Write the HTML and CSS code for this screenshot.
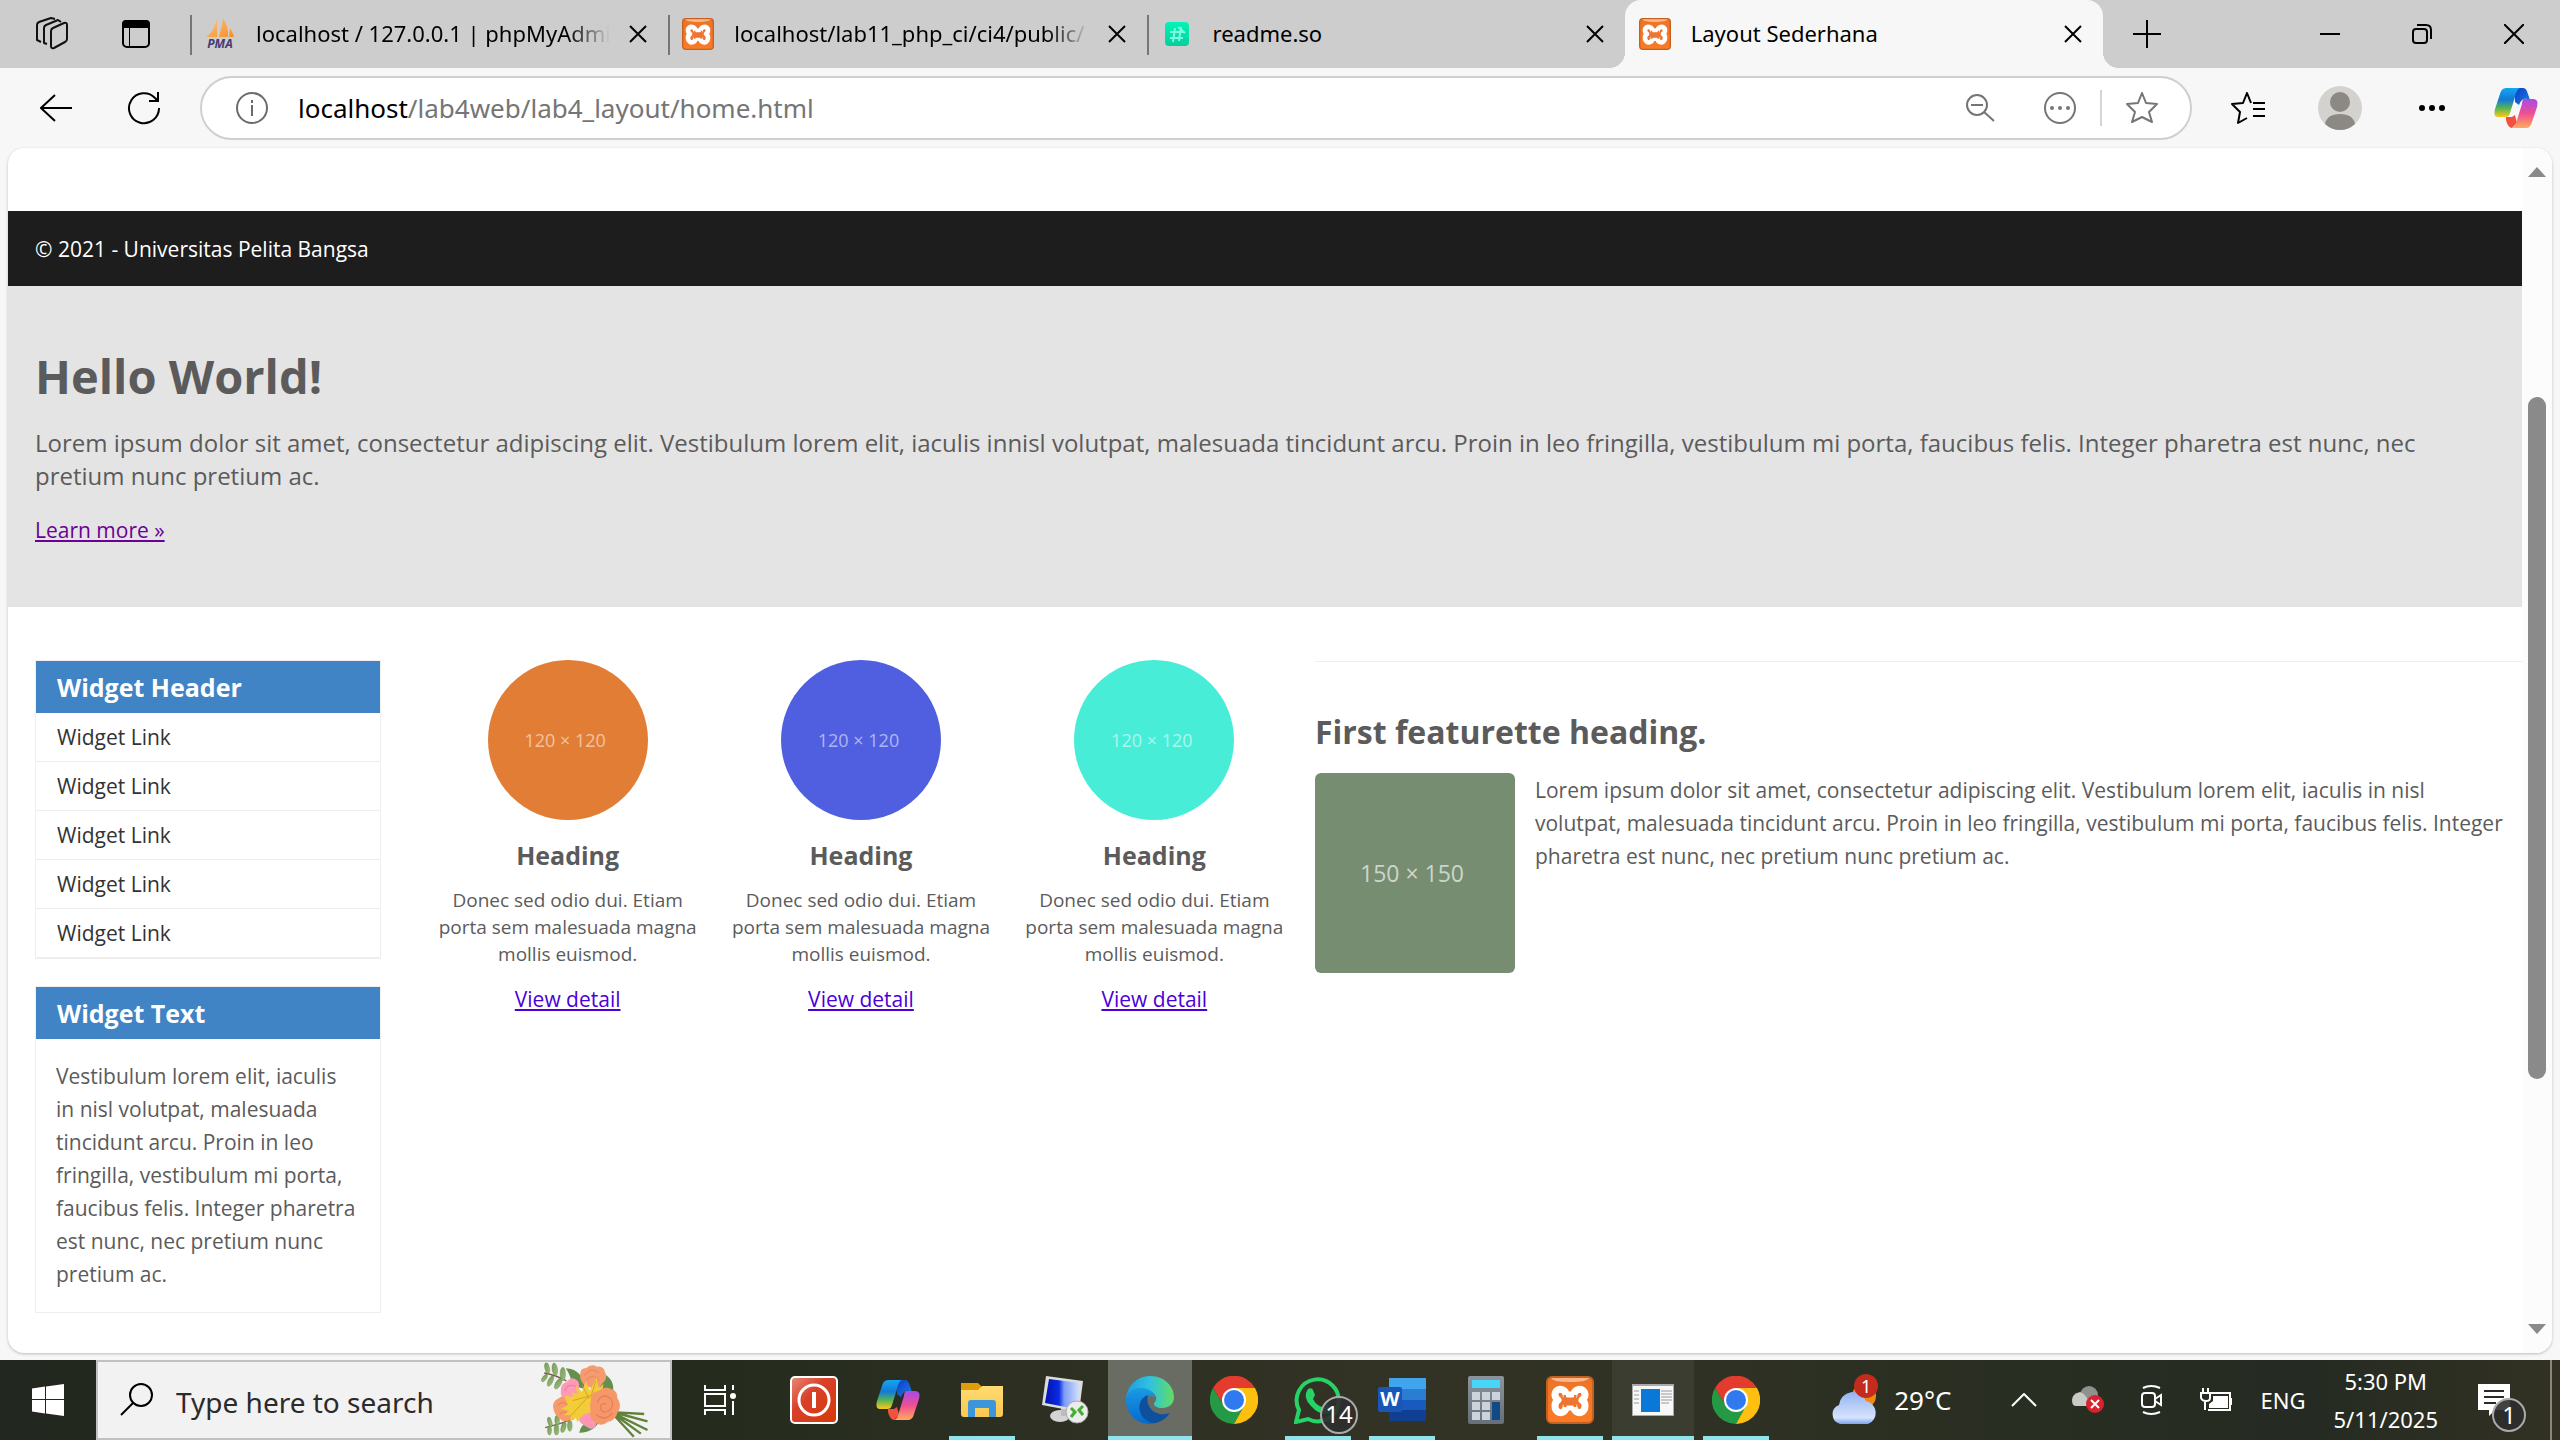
FILE: index.html
```html
<!DOCTYPE html>
<html lang="en">
<head>
<meta charset="utf-8">
<title>Layout Sederhana</title>
<link rel="stylesheet" href="styles.css">
</head>
<body>
<svg class="defs" aria-hidden="true">
  <defs>
    <linearGradient id="g-orange" x1="0" y1="0" x2="0" y2="1"><stop offset="0" stop-color="#ec7427"/><stop offset="1" stop-color="#fb7a26"/></linearGradient>
    <linearGradient id="g-sail" x1="0" y1="0" x2="1" y2="1"><stop offset="0" stop-color="#ffc58a"/><stop offset="1" stop-color="#f98c1d"/></linearGradient>
    <linearGradient id="g-readme" x1="0" y1="0" x2="0" y2="1"><stop offset="0" stop-color="#00f5b8"/><stop offset="1" stop-color="#04cf9c"/></linearGradient>
    <linearGradient id="g-cop1" x1="0" y1="0" x2="0" y2="1"><stop offset="0" stop-color="#14a6f2"/><stop offset=".4" stop-color="#1479d8"/><stop offset=".68" stop-color="#4fb35a"/><stop offset="1" stop-color="#ffc912"/></linearGradient>
    <linearGradient id="g-cop2" x1="0" y1="0" x2="0" y2="1"><stop offset="0" stop-color="#a44ce8"/><stop offset=".5" stop-color="#ef4f93"/><stop offset="1" stop-color="#ffab5c"/></linearGradient>
    <linearGradient id="g-cop3" x1="0" y1="0" x2="1" y2="1"><stop offset="0" stop-color="#0b3fc4"/><stop offset="1" stop-color="#1f7be8"/></linearGradient>
    <linearGradient id="g-power" x1="0" y1="0" x2="1" y2="1"><stop offset="0" stop-color="#e98a78"/><stop offset=".4" stop-color="#d8402a"/><stop offset="1" stop-color="#d63a06"/></linearGradient>
    <linearGradient id="g-folder" x1="0" y1="0" x2="0" y2="1"><stop offset="0" stop-color="#ffdb73"/><stop offset="1" stop-color="#f9c84f"/></linearGradient>
    <linearGradient id="g-screen" x1="0" y1="0" x2="1" y2="0"><stop offset="0" stop-color="#0512b4"/><stop offset=".4" stop-color="#0a2be0"/><stop offset=".55" stop-color="#7b9cf5"/><stop offset="1" stop-color="#d5e2ff"/></linearGradient>
    <linearGradient id="g-edge1" x1="0" y1="0" x2="1" y2="0"><stop offset="0" stop-color="#1b9de2"/><stop offset=".5" stop-color="#2fc2df"/><stop offset="1" stop-color="#62dd63"/></linearGradient>
    <linearGradient id="g-edge2" x1="0" y1="0" x2="0" y2="1"><stop offset="0" stop-color="#1a9be3"/><stop offset="1" stop-color="#0569cf"/></linearGradient>
    <linearGradient id="g-cloud" x1="0" y1="0" x2="0" y2="1"><stop offset="0" stop-color="#93b4f2"/><stop offset=".8" stop-color="#d6e3fd"/><stop offset="1" stop-color="#7ea3ee"/></linearGradient>
    <linearGradient id="g-calc" x1="0" y1="0" x2="0" y2="1"><stop offset="0" stop-color="#8b949c"/><stop offset="1" stop-color="#66707a"/></linearGradient>
    <linearGradient id="g-leaf" x1="0" y1="0" x2="1" y2="1"><stop offset="0" stop-color="#6f9a50"/><stop offset="1" stop-color="#a3c181"/></linearGradient>

    <symbol id="close" viewBox="0 0 24 24"><path d="M4 4 20 20M20 4 4 20" fill="none" stroke="currentColor" stroke-width="2"/></symbol>

    <symbol id="xampp" viewBox="0 0 48 48">
      <rect x="1" y="1" width="46" height="46" rx="5" fill="url(#g-orange)" stroke="#c5611f" stroke-width="2"/>
      <path d="M5 2h38c-2 3-8 4-19 4S7 5 5 2Z" fill="#fbb68c"/>
      <path d="M17 14c-5-2-8 1-8 5 0 3 2 4 3 5-2 1-3 3-3 6 0 5 4 8 8 6 2-1 3-3 3-5h8c0 2 1 4 3 5 4 2 8-1 8-6 0-3-1-5-3-6 1-1 3-2 3-5 0-4-3-7-8-5-2 1-3 3-3 5h-8c0-2-1-4-3-5Z" fill="#ee7430" stroke="#fff" stroke-width="7" stroke-linejoin="round"/>
      <path d="M19 19v4h10v-4M19 31v-3h10v3" fill="none" stroke="#ee7430" stroke-width="3"/>
      <path d="M20 19h8v2h-8zM20 31h8v3h-8z" fill="#fff"/>
    </symbol>

    <symbol id="copilot" viewBox="0 0 44 40">
      <path d="M21 0h8c3 0 4 3 5 6l2 6c-6-3-9 0-11 5l-4-3Z" fill="url(#g-cop3)"/>
      <path d="M13 0h13c-3 1-4 5-5 9l-5 16c-1 3-2 4-5 4H4c-4 0-4-4-3-8L6 6c1-4 3-6 7-6Z" fill="url(#g-cop1)"/>
      <path d="M12 29h6l3-2 2 8-5 5c-3 0-5-4-6-8Z" fill="#f2513d"/>
      <path d="M30 11h9c5 0 5 4 4 8l-5 15c-1 4-3 6-7 6H18c3-1 4-4 5-8l5-16c0-3 1-5 2-5Z" fill="url(#g-cop2)"/>
    </symbol>

    <symbol id="chrome" viewBox="0 0 48 48">
      <path d="M3 12A24 24 0 0 1 45 12H24L14 30Z" fill="#e33b2e"/>
      <path d="M3 12A24 24 0 0 0 24 48L34 30 24 34 14 30Z" fill="#249a45"/>
      <path d="M45 12A24 24 0 0 1 24 48L34 30 34 18 24 12Z" fill="#fdbf10"/>
      <circle cx="24" cy="24" r="12" fill="#fff"/><circle cx="24" cy="24" r="10" fill="#2f7af0"/>
    </symbol>
  </defs>
</svg>

<header class="tabs">
  <div class="tabs-tools">
    <button class="icon-btn" aria-label="Workspaces">
      <svg width="34" height="34" viewBox="0 0 34 34" fill="none" stroke="#111" stroke-width="2" stroke-linejoin="round"><path d="M16 14q0-2 2-3l11-5q3-1 3 2v14q0 2-2 3L19 31q-3 1-3-2Z"/><path d="M12 27l-3-1V11q0-2 2-3L23 3l3 2M6 25 2 23V8q0-2 2-3L16 1l4 1"/></svg>
    </button>
    <button class="icon-btn" aria-label="Tab actions">
      <svg width="30" height="30" viewBox="0 0 30 30"><rect x="2" y="2" width="26" height="26" rx="4" fill="none" stroke="#000" stroke-width="2"/><path d="M1 9V5q0-4 4-4h20q4 0 4 4v4ZM8 9h1v19H8Z"/></svg>
    </button>
  </div>
  <nav class="tab-list" aria-label="Tabs">
    <div class="tab">
      <svg class="favicon" viewBox="0 0 32 32"><path d="M13 1v18H2Q10 14 13 1ZM19 0q6 10 5 19H15q3-10 4-19ZM26 10q3 5 4 9h-5Z" fill="url(#g-sail)"/><text x="16" y="30" text-anchor="middle" class="pma">PMA</text></svg>
      <span class="tab-title faded">localhost / 127.0.0.1 | phpMyAdmin</span>
      <button class="tab-close" aria-label="Close tab"><svg><use href="#close"/></svg></button>
    </div>
    <div class="tab">
      <svg class="favicon"><use href="#xampp"/></svg>
      <span class="tab-title faded">localhost/lab11_php_ci/ci4/public/</span>
      <button class="tab-close" aria-label="Close tab"><svg><use href="#close"/></svg></button>
    </div>
    <div class="tab">
      <svg class="favicon" viewBox="0 0 32 32"><rect x="4" y="4" width="24" height="24" rx="4" fill="url(#g-readme)"/><path d="M14 10 12 24M20 9l-2 14M9 14h14M9 20h13M17 9l7 6" stroke="#7dffdc" stroke-width="2"/></svg>
      <span class="tab-title">readme.so</span>
      <button class="tab-close" aria-label="Close tab"><svg><use href="#close"/></svg></button>
    </div>
    <div class="tab active">
      <svg class="favicon"><use href="#xampp"/></svg>
      <span class="tab-title">Layout Sederhana</span>
      <button class="tab-close" aria-label="Close tab"><svg><use href="#close"/></svg></button>
    </div>
  </nav>
  <button class="icon-btn new-tab" aria-label="New tab"><svg width="28" height="28" viewBox="0 0 28 28"><path d="M14 0v28M0 14h28" stroke="#000" stroke-width="2"/></svg></button>
  <div class="window-buttons">
    <button class="icon-btn" aria-label="Minimize"><svg width="20" height="20" viewBox="0 0 20 20"><path d="M0 10h20" stroke="#000" stroke-width="2"/></svg></button>
    <button class="icon-btn" aria-label="Restore"><svg width="20" height="20" viewBox="0 0 20 20" fill="none" stroke="#000" stroke-width="2"><rect x="1" y="5" width="14" height="14" rx="3"/><path d="M5 1h9q5 0 5 5v9"/></svg></button>
    <button class="icon-btn" aria-label="Close window"><svg width="20" height="20" viewBox="0 0 20 20"><path d="M0 0 20 20M20 0 0 20" stroke="#000" stroke-width="2"/></svg></button>
  </div>
</header>

<div class="toolbar">
  <button class="icon-btn" aria-label="Back"><svg width="32" height="28" viewBox="0 0 32 28" fill="none" stroke="#000" stroke-width="2"><path d="M32 14H1M15 1 1 14l14 13"/></svg></button>
  <button class="icon-btn" aria-label="Refresh"><svg width="34" height="34" viewBox="0 0 34 34" fill="none" stroke="#000" stroke-width="2"><path d="M32 17A15 15 0 1 1 28 7l3 3M31 1v9h-9"/></svg></button>
  <form class="address">
    <svg width="32" height="32" viewBox="0 0 32 32" fill="none" stroke="#6b6b6b" stroke-width="2"><circle cx="16" cy="16" r="15"/><path d="M16 13v11M16 8v3"/></svg>
    <a class="url" href="#"><b>localhost</b>/lab4web/lab4_layout/home.html</a>
    <button type="button" class="icon-btn wide" aria-label="Zoom out"><svg width="30" height="30" viewBox="0 0 30 30" fill="none" stroke="#757575" stroke-width="2"><circle cx="12" cy="12" r="10"/><path d="M6 12h12M19 19l10 9"/></svg></button>
    <button type="button" class="icon-btn wide" aria-label="More"><svg width="32" height="32" viewBox="0 0 32 32"><circle cx="16" cy="16" r="15" fill="none" stroke="#757575" stroke-width="2"/><g fill="#757575"><circle cx="8" cy="16" r="2"/><circle cx="16" cy="16" r="2"/><circle cx="24" cy="16" r="2"/></g></svg></button>
    <span class="divider"></span>
    <button type="button" class="icon-btn wide" aria-label="Favorite"><svg width="34" height="34" viewBox="0 0 34 34" fill="none" stroke="#757575" stroke-width="2" stroke-linejoin="round"><path d="m17 2 4 10 11 1-8 8 3 10-10-5-10 5 3-10-8-8 11-1Z"/></svg></button>
  </form>
  <div class="toolbar-end">
    <button class="icon-btn" aria-label="Favorites"><svg width="34" height="34" viewBox="0 0 34 34" fill="none" stroke="#000" stroke-width="2" stroke-linejoin="round"><path d="M20 12 16 2l-4 10-11 1 8 8-2 11 9-5M22 12h12M22 18h12M22 25h12"/></svg></button>
    <button class="icon-btn" aria-label="Profile"><svg width="46" height="46" viewBox="0 0 46 46"><circle cx="23" cy="23" r="22" fill="#d3d2ce"/><circle cx="23" cy="17" r="10" fill="#8c8884"/><path d="M8 39q2-10 15-10t15 10a22 22 0 0 1-30 0Z" fill="#8c8884"/></svg></button>
    <button class="icon-btn" aria-label="Settings and more"><svg width="28" height="8" viewBox="0 0 28 8"><circle cx="4" cy="4" r="3"/><circle cx="14" cy="4" r="3"/><circle cx="24" cy="4" r="3"/></svg></button>
    <button class="icon-btn" aria-label="Copilot"><svg width="44" height="40"><use href="#copilot"/></svg></button>
  </div>
</div>

<main class="viewport">
  <div class="page">
    <div class="footer-bar">© 2021 - Universitas Pelita Bangsa</div>
    <section class="hero">
      <h1>Hello World!</h1>
      <p>Lorem ipsum dolor sit amet, consectetur adipiscing elit. Vestibulum lorem elit, iaculis innisl volutpat, malesuada tincidunt arcu. Proin in leo fringilla, vestibulum mi porta, faucibus felis. Integer pharetra est nunc, nec pretium nunc pretium ac.</p>
      <a href="#">Learn more »</a>
    </section>
    <div class="columns">
      <aside class="sidebar">
        <section class="widget">
          <h3>Widget Header</h3>
          <ul>
            <li><a href="#">Widget Link</a></li>
            <li><a href="#">Widget Link</a></li>
            <li><a href="#">Widget Link</a></li>
            <li><a href="#">Widget Link</a></li>
            <li><a href="#">Widget Link</a></li>
          </ul>
        </section>
        <section class="widget">
          <h3>Widget Text</h3>
          <p>Vestibulum lorem elit, iaculis in nisl volutpat, malesuada tincidunt arcu. Proin in leo fringilla, vestibulum mi porta, faucibus felis. Integer pharetra est nunc, nec pretium nunc pretium ac.</p>
        </section>
      </aside>
      <div class="cards">
        <article class="card">
          <div class="circle orange">120 × 120</div>
          <h3>Heading</h3>
          <p>Donec sed odio dui. Etiam porta sem malesuada magna mollis euismod.</p>
          <a href="#">View detail</a>
        </article>
        <article class="card">
          <div class="circle blue">120 × 120</div>
          <h3>Heading</h3>
          <p>Donec sed odio dui. Etiam porta sem malesuada magna mollis euismod.</p>
          <a href="#">View detail</a>
        </article>
        <article class="card">
          <div class="circle teal">120 × 120</div>
          <h3>Heading</h3>
          <p>Donec sed odio dui. Etiam porta sem malesuada magna mollis euismod.</p>
          <a href="#">View detail</a>
        </article>
      </div>
      <section class="featurette">
        <h2>First featurette heading.</h2>
        <div class="media">
          <div class="thumb">150 × 150</div>
          <p>Lorem ipsum dolor sit amet, consectetur adipiscing elit. Vestibulum lorem elit, iaculis in nisl volutpat, malesuada tincidunt arcu. Proin in leo fringilla, vestibulum mi porta, faucibus felis. Integer pharetra est nunc, nec pretium nunc pretium ac.</p>
        </div>
      </section>
    </div>
  </div>
  <div class="scrollbar" aria-hidden="true">
    <svg width="18" height="10" viewBox="0 0 18 10"><path d="M9 0 18 10H0Z" fill="#8a8a8a"/></svg>
    <div class="track"><span class="scroll-thumb"></span></div>
    <svg width="18" height="10" viewBox="0 0 18 10"><path d="M0 0H18L9 10Z" fill="#8a8a8a"/></svg>
  </div>
</main>

<footer class="taskbar">
  <button class="start" aria-label="Start"><svg width="32" height="32" viewBox="0 0 32 32" fill="#fff"><path d="M0 4.500 13 2.600V15H0ZM14 2.400 32 0V15H14ZM0 16H13V29.400L0 27.500ZM14 16H32V32L14 29.600Z"/></svg></button>
  <label class="search">
    <svg width="34" height="34" viewBox="0 0 34 34" fill="none" stroke="#000" stroke-width="2"><circle cx="21" cy="12" r="11"/><path d="M13 20 1 32"/></svg>
    <input type="text" placeholder="Type here to search" aria-label="Search">
    <svg class="bouquet" width="110" height="76" viewBox="35 19 325 228">
      <path d="M45 52Q80 58 112 76M48 216Q95 205 135 188" fill="none" stroke="#7d5a45" stroke-width="4"/>
      <g fill="url(#g-leaf)" stroke="#55793f" stroke-width="1"><ellipse cx="54" cy="37" rx="7" ry="16" transform="rotate(-12 54 37)"/><ellipse cx="77" cy="41" rx="8" ry="19" transform="rotate(-8 77 41)"/><ellipse cx="101" cy="55" rx="8" ry="20"/><ellipse cx="46" cy="67" rx="6" ry="13" transform="rotate(35 46 67)"/><ellipse cx="64" cy="76" rx="7" ry="17" transform="rotate(25 64 76)"/><ellipse cx="87" cy="84" rx="8" ry="18" transform="rotate(30 87 84)"/><ellipse cx="62" cy="199" rx="6" ry="15" transform="rotate(-15 62 199)"/><ellipse cx="84" cy="194" rx="7" ry="15"/><ellipse cx="61" cy="224" rx="6" ry="14"/><ellipse cx="82" cy="222" rx="7" ry="16"/><ellipse cx="103" cy="215" rx="7" ry="16" transform="rotate(15 103 215)"/><ellipse cx="122" cy="210" rx="7" ry="17"/></g>
      <path d="M110 38Q160 40 168 100L130 90Q125 60 110 38ZM225 55Q260 75 250 115L210 100ZM150 231Q160 190 212 190 200 230 150 231Z" fill="#64904d"/>
      <path d="M262 170 345 175M262 172 355 197M260 176 355 223M258 178 335 234M256 180 314 243" stroke="#61823b" stroke-width="7"/>
      <path d="M153 55q0-18 18-18 16-14 32-4 20-2 24 15 10 18-4 32l-20 24-38-16q-14-15-12-33Z" fill="#f59b70"/><path d="M165 60q20-28 45-8M172 72q20-20 38 0" fill="none" stroke="#ec8c64" stroke-width="4"/>
      <path d="M95 103q0-20 18-24 12-18 26-8 14 8 10 24 6 20-10 32l-25 12q-22-10-19-36Z" fill="#fd9bb7"/><path d="M106 105q10-24 34-12" fill="none" stroke="#f47fa6" stroke-width="4"/>
      <path d="M72 155q-2-18 14-26 16-12 30-2l18 40-8 24q-20 12-34-2-18-12-20-34Z" fill="#f79a6e"/><path d="M86 150q14-18 28-2M92 176q12-14 24-2" fill="none" stroke="#ec8862" stroke-width="4"/>
      <path d="M145 185l40-28 20 30-6 26q-14 12-26 0-20-6-28-28Z" fill="#fd95b5"/>
      <path d="M105 120l28 4-8-14 20 6-6-27 19 20 12-32 12 28 20-40 6 34 15-15-6 36-20 45-35 12-18 22-4-12-18 10 4-18-22 0 14-14-24-6 22-10Z" fill="#f3cc3a"/><path d="M125 180l55-60M130 135l55-15M160 90l20 40M200 75l-15 50" stroke="#d8a620" stroke-width="3"/>
      <path d="M186 130q0-22 22-24 20-18 38-6 20 6 18 26 16 24 2 42-8 28-30 30-20 18-38 2-18-8-14-34-4-18 2-36Z" fill="#f6976a"/><path d="M204 140q16-32 42-10 12 22-8 36-24 10-24-14 4-12 18-6M200 176q26 24 50-4" fill="none" stroke="#e8805a" stroke-width="4"/>
    </svg>
  </label>
  <div class="apps">
    <button class="app task-view" aria-label="Task View"><svg width="32" height="30" viewBox="0 0 32 30" fill="none" stroke="#fff" stroke-width="2"><path d="M1 0v5h20V0M1 30v-5h20v5M1 9h20v12H1ZM29 0v5M29 16v14"/><circle cx="29" cy="11" r="3" fill="#fff" stroke="none"/></svg></button>
    <button class="app" aria-label="Power"><svg width="48" height="48" viewBox="0 0 48 48"><rect x="1" y="1" width="46" height="46" rx="4" fill="url(#g-power)" stroke="#fff" stroke-width="2"/><circle cx="24" cy="24" r="15" fill="none" stroke="#fff" stroke-width="3"/><path d="M24 16v16" stroke="#fff" stroke-width="4"/></svg></button>
    <button class="app" aria-label="Copilot"><svg width="44" height="40"><use href="#copilot"/></svg></button>
    <button class="app running" aria-label="File Explorer"><svg width="42" height="34" viewBox="0 0 42 34"><path d="M0 0h17l3 3v6H0Z" fill="#e19c06"/><path d="M0 7h17l4-4h21v28q0 3-3 3H3q-3 0-3-3Z" fill="url(#g-folder)"/><path d="M7 34V20q0-3 3-3h22q3 0 3 3v14h-7v-9H14v9Z" fill="#3d96dc"/></svg></button>
    <button class="app" aria-label="Remote Desktop"><svg width="48" height="48" viewBox="0 0 48 48"><ellipse cx="18" cy="40" rx="10" ry="6" fill="#d4d4d4"/><path d="M19 30h8l1 10h-9Z" fill="#bdbdbd"/><path d="M4 0 41 5 37 36 0 29Z" fill="#dcdcdc"/><path d="M7 3 38 7 34 33 3 27Z" fill="url(#g-screen)"/><circle cx="35" cy="36" r="11" fill="#ececec" stroke="#aaa"/><path d="M29 32l4 4-4 5M41 30l-4 4 4 5" fill="none" stroke="#3fae2a" stroke-width="3"/></svg></button>
    <button class="app focused" aria-label="Microsoft Edge"><svg width="48" height="48" viewBox="0 0 48 48"><path d="M0 24A24 24 0 0 1 24 0C39 0 48 11 48 21c0 7-5 11-12 11-5 0-8-2-8-4s3-3 2-7c-2-8-22-12-30 3Z" fill="url(#g-edge1)"/><path d="M0 24C1 15 8 12 14 12c9 0 15 5 15 9-6-3-12 1-12 9 0 8 8 15 14 17C15 51 0 41 0 24Z" fill="url(#g-edge2)"/><path d="M22 19c-9 3-11 13-6 21 5 7 13 8 17 6 5-2 8-5 11-9-5 2-14 2-19-4-4-5-4-10-3-14Z" fill="#0d509c"/></svg></button>
    <button class="app" aria-label="Google Chrome"><svg width="48" height="48"><use href="#chrome"/></svg></button>
    <button class="app running" aria-label="WhatsApp"><svg width="48" height="48" viewBox="0 0 48 48"><path d="M2 46 5 34A21 21 0 1 1 14 43Z" fill="none" stroke="#25d366" stroke-width="4"/><path d="M14 13q4-2 5 1l2 5-2 4q3 6 9 8l4-3 6 4q0 5-6 6-8 0-15-8-9-9-3-17Z" fill="#25d366"/></svg><span class="badge">14</span></button>
    <button class="app running" aria-label="Word"><svg width="48" height="44" viewBox="0 0 48 44"><path d="M11 0h37v11H11Z" fill="#41a5ee"/><path d="M11 11h37v11H11Z" fill="#2b7cd3"/><path d="M11 22h37v10H11Z" fill="#185abd"/><path d="M11 32h37v11H11Z" fill="#103f91"/><rect y="9" width="24" height="25" rx="2" fill="#1956b8"/><text x="12" y="28" text-anchor="middle" class="word-w">W</text></svg></button>
    <button class="app" aria-label="Calculator"><svg width="36" height="48" viewBox="0 0 36 48"><rect width="36" height="48" rx="2" fill="url(#g-calc)"/><path d="M4 4h28v8H4Z" fill="#45d6f8"/><path d="M4 16h8v8H4ZM14 16h8v8h-8ZM24 16h8v8h-8ZM4 26h8v8H4ZM14 26h8v8h-8ZM4 36h8v8H4ZM14 36h8v8h-8Z" fill="#ccd3da"/><path d="M24 26h8v18h-8Z" fill="#124a86"/></svg></button>
    <button class="app running" aria-label="XAMPP"><svg width="48" height="48"><use href="#xampp"/></svg></button>
    <button class="app stacked" aria-label="Window"><svg width="42" height="32" viewBox="0 0 42 32"><path d="M0 0h42v32H0Z" fill="#a9a9a9"/><path d="M1 2h40v29H1Z" fill="#f7f7f7"/><path d="M9 5h19v23H9Z" fill="#0a78d7"/><path d="M29 7h11M29 10h11M29 13h11M29 16h11M29 19h8M2 7h5M2 11h5M2 15h5M2 19h5" stroke="#999"/></svg></button>
    <button class="app running" aria-label="Google Chrome"><svg width="48" height="48"><use href="#chrome"/></svg></button>
  </div>
  <div class="tray">
    <button class="weather"><span class="weather-icon"><svg width="48" height="48" viewBox="0 0 48 48"><circle cx="34" cy="20" r="12" fill="#f08a12"/><path d="M10 48a10 10 0 0 1-1-19 14 14 0 0 1 27-4A12 12 0 0 1 38 48Z" fill="url(#g-cloud)"/></svg><span class="alert">1</span></span>29°C</button>
    <button class="icon-btn" aria-label="Show hidden icons"><svg width="26" height="14" viewBox="0 0 26 14" fill="none" stroke="#fff" stroke-width="2"><path d="M1 13 13 1l12 12"/></svg></button>
    <button class="icon-btn" aria-label="OneDrive"><svg width="32" height="28" viewBox="0 0 32 28"><circle cx="17" cy="9" r="9" fill="#8f918d"/><path d="M8 6a12 12 0 0 1 8 14H4Q0 20 0 14T8 6Z" fill="#c9cac7"/><circle cx="23" cy="18" r="9" fill="#d8232f"/><path d="m19 14 8 8m0-8-8 8" stroke="#fff" stroke-width="2"/></svg></button>
    <button class="icon-btn" aria-label="Meet Now"><svg width="24" height="30" viewBox="0 0 24 30" fill="none" stroke="#fff" stroke-width="2"><rect x="2" y="8" width="13" height="14" rx="3"/><path d="m15 14 6-4v10l-6-4M3 3q8-4 17 0M3 27q8 4 17 0"/></svg></button>
    <button class="icon-btn" aria-label="Battery"><svg width="32" height="24" viewBox="0 0 32 24" fill="none" stroke="#fff" stroke-width="2"><path d="M10 5h20v17H8M31 10v7M3 0v5M8 0v5M1 5h9v5q0 3-4 3t-5-3ZM5 13v9"/><path d="M13 8h15v12H9v-4l4-3Z" fill="#fff" stroke="none"/></svg></button>
    <button class="lang">ENG</button>
    <button class="clock"><span>5:30 PM</span><span>5/11/2025</span></button>
    <button class="notify" aria-label="Notifications"><svg width="32" height="32" viewBox="0 0 32 32"><path d="M0 0h32v26H17l-6 6v-6H0Z" fill="#fff"/><path d="M6 7h20M6 13h20M6 19h12" stroke="#2a2c24" stroke-width="2"/></svg><span class="badge">1</span></button>
  </div>
</footer>
</body>
</html>
```
FILE: styles.css
```css
* { box-sizing: border-box; }

body {
  margin: 0;
  min-height: 100vh;
  display: flex;
  flex-direction: column;
  background: #f7f7f7;
  color: #000;
  font-family: "Open Sans", "Noto Sans", sans-serif;
}

button {
  margin: 0;
  padding: 0;
  border: 0;
  background: none;
  color: inherit;
  font: inherit;
}

h1, h2, h3, p, ul { margin: 0; padding: 0; }

h1, h2, h3 { font-weight: 700; }

svg { display: block; flex: none; }

.defs { position: absolute; width: 0; height: 0; }

.icon-btn {
  display: flex;
  align-items: center;
  justify-content: center;
  min-width: 48px;
  height: 48px;
}

/* Tab strip */
.tabs {
  display: flex;
  align-items: center;
  height: 68px;
  background: #cdcdcd;
  font-family: "Noto Sans", sans-serif;
  font-size: 22px;
}

.tabs-tools {
  display: flex;
  gap: 36px;
  width: 190px;
  padding-left: 28px;
}

.tab-list { display: flex; flex: 0 1 1913px; min-width: 0; height: 100%; }

.tab {
  position: relative;
  display: flex;
  align-items: center;
  flex: 1;
  min-width: 0;
  padding: 0 14px;
}

.tab::before {
  content: "";
  position: absolute;
  left: 0;
  top: 15px;
  bottom: 13px;
  width: 2px;
  background: #767676;
}

.tab.active {
  background: #f7f7f7;
  border-radius: 16px 16px 0 0;
}

.tab.active::before,
.tab.active::after {
  content: "";
  position: absolute;
  top: auto;
  bottom: 0;
  width: 16px;
  height: 16px;
}

.tab.active::before {
  left: -16px;
  background: radial-gradient(circle at 0 0, #cdcdcd 16px, #f7f7f7 16px);
}

.tab.active::after {
  right: -16px;
  background: radial-gradient(circle at 100% 0, #cdcdcd 16px, #f7f7f7 16px);
}

.favicon { width: 32px; height: 32px; margin-right: 20px; }

.pma {
  font: italic bold 12px "Open Sans", sans-serif;
  fill: #453a73;
}

.tab-title {
  flex: 1;
  padding-bottom: 2px;
  overflow: hidden;
  white-space: nowrap;
}

.tab-title.faded { mask-image: linear-gradient(to right, #000 88%, transparent); }

.tab-close {
  display: flex;
  align-items: center;
  justify-content: center;
  width: 32px;
  height: 32px;
  margin-left: 12px;
}

.tab-close svg { width: 24px; height: 24px; }

.new-tab { margin-left: 20px; }

.window-buttons { display: flex; gap: 44px; margin-left: auto; padding-right: 22px; }

/* Toolbar */
.toolbar {
  display: flex;
  align-items: center;
  height: 80px;
  padding: 0 20px 0 32px;
}

.toolbar > .icon-btn + .icon-btn { margin-left: 40px; }

.address {
  display: flex;
  align-items: center;
  flex: 1;
  height: 64px;
  margin-left: 32px;
  padding: 0 8px 0 34px;
  border: 2px solid #cfcfcf;
  border-radius: 32px;
  background: #fff;
}

.url {
  flex: 1;
  margin-left: 30px;
  color: #757575;
  font-family: "Noto Sans", sans-serif;
  font-size: 26px;
  text-decoration: none;
}

.url b { color: #000; font-weight: 400; }

.icon-btn.wide { width: 80px; }

.divider { width: 2px; height: 36px; background: #d5d5d5; }

.toolbar-end {
  display: flex;
  align-items: center;
  gap: 44px;
  padding-left: 32px;
}

.toolbar-end .icon-btn:last-child { margin-left: -8px; }

/* Browser viewport */
.viewport {
  display: flex;
  flex: 1;
  margin: 0 8px 7px;
  overflow: hidden;
  border-radius: 16px;
  background: #fff;
  box-shadow: 0 1px 3px #bbb;
}

.page {
  flex: 1;
  min-width: 0;
  padding-top: 63px;
  color: #5b5b5b;
  font-size: 21px;
}

.footer-bar {
  padding: 24px 27px 22px;
  background: #1d1d1d;
  color: #fff;
  line-height: 29px;
}

.hero {
  padding: 58px 27px 62px;
  background: #e4e4e4;
}

.hero h1 { margin-bottom: 18px; font-size: 47px; line-height: 64px; }

.hero p { margin-bottom: 24px; font-size: 24px; line-height: 33px; }

.hero a { color: #6a0096; line-height: 29px; }

.columns {
  display: grid;
  grid-template-columns: 346px 880px 1fr;
  padding: 53px 0 38px 27px;
}

.widget { border: 1px solid #eee; }

.widget + .widget { margin-top: 27px; }

.widget h3 {
  padding: 0 21px;
  background: #4084c5;
  color: #fff;
  font-size: 25px;
  line-height: 52px;
}

.widget ul { list-style: none; }

.widget li { border-bottom: 1px solid #eee; }

.widget li a {
  display: block;
  padding: 0 21px;
  color: #333;
  line-height: 48px;
  text-decoration: none;
}

.widget p { padding: 21px 20px; line-height: 33px; }

.cards { display: flex; margin-left: 40px; width: 880px; }

.card { flex: 1; text-align: center; padding: 0 13px; }

.circle {
  width: 160px;
  height: 160px;
  margin: 0 auto;
  padding-right: 5px;
  border-radius: 50%;
  color: rgba(255, 255, 255, .55);
  font-size: 18px;
  line-height: 160px;
}

.orange { background: #e27d35; }
.blue { background: #4f5fe0; }
.teal { background: #48edd8; }

.card h3 { margin: 17px 0 14px; font-size: 25px; line-height: 36px; }

.card p { margin-bottom: 17px; font-size: 19px; line-height: 27px; }

.card a { color: #4b00d8; line-height: 29px; }

.featurette {
  margin: 1px 0 0 54px;
  padding-top: 48px;
  border-top: 1px solid #eee;
}

.featurette h2 { margin-bottom: 20px; font-size: 32px; line-height: 43px; }

.media { display: flex; align-items: flex-start; }

.thumb {
  flex: none;
  width: 200px;
  height: 200px;
  margin-right: 20px;
  padding-right: 6px;
  border-radius: 6px;
  background: #768d71;
  color: rgba(255, 255, 255, .65);
  font-size: 23px;
  line-height: 200px;
  text-align: center;
}

.media p { padding: 1px 12px 0 0; line-height: 33px; }

.scrollbar {
  display: flex;
  flex-direction: column;
  align-items: center;
  width: 30px;
  padding: 19px 0;
  background: #fcfcfc;
}

.track { flex: 1; width: 18px; padding: 220px 0 0; }

.scroll-thumb {
  display: block;
  height: 682px;
  border-radius: 9px;
  background: #8a8a8a;
}

/* Taskbar */
.taskbar {
  display: flex;
  height: 80px;
  background: linear-gradient(90deg, #22271f, #252c1d 28%, #2c2f22 40%, #333325 55%, #2c3022 72%, #252b22 90%, #323123);
  color: #fff;
  font-family: "Noto Sans", sans-serif;
  font-size: 22px;
}

.start { display: flex; align-items: center; padding: 0 32px; }

.search {
  display: flex;
  align-items: center;
  width: 576px;
  padding: 0 20px 0 22px;
  border: 2px solid #c1c1bf;
  background: #f2f2f2;
}

.search input {
  flex: 1;
  min-width: 0;
  height: 60px;
  margin-left: 22px;
  padding: 4px 0 0;
  border: 0;
  background: none;
  font: 28px "Noto Sans", sans-serif;
}

.search input::placeholder { color: #2b2b2b; opacity: 1; }

.apps { display: flex; }

.app {
  position: relative;
  display: flex;
  align-items: center;
  justify-content: center;
  width: 84px;
}

.task-view { width: 96px; margin-right: 4px; }

.running::after,
.focused::after,
.stacked::after {
  content: "";
  position: absolute;
  left: 9px;
  right: 9px;
  bottom: 0;
  height: 4px;
  background: #8ee4ea;
}

.focused { background: #696c63; }

.stacked { width: 82px; background: #3b3d31; }

.focused::after,
.stacked::after { left: 0; right: 0; }

.badge {
  position: absolute;
  left: 36px;
  top: 36px;
  min-width: 38px;
  height: 38px;
  border: 2px solid #aaa;
  border-radius: 19px;
  background: rgba(45, 45, 45, .9);
  font-size: 24px;
  line-height: 32px;
  text-align: center;
}

.app .badge { left: 44px; }

.word-w { font: bold 20px "Open Sans", sans-serif; fill: #fff; }

.tray {
  display: flex;
  align-items: center;
  margin-left: auto;
  margin-right: 8px;
  padding-right: 40px;
  border-right: 2px solid #85877f;
}

.tray .icon-btn { width: 64px; height: 80px; }

.weather { display: flex; align-items: center; gap: 16px; margin-right: 40px; font-size: 26px; }

.weather-icon { position: relative; }

.alert {
  position: absolute;
  right: 0;
  top: -2px;
  width: 24px;
  height: 24px;
  border-radius: 12px;
  background: #c42b1c;
  font-size: 18px;
  line-height: 24px;
}

.lang { margin: 0 28px 0 13px; }

.clock { display: flex; flex-direction: column; align-items: center; line-height: 38px; }

.notify { position: relative; margin-left: 40px; }

.notify .badge {
  left: 14px;
  top: 14px;
  min-width: 34px;
  height: 34px;
  line-height: 29px;
}
```
